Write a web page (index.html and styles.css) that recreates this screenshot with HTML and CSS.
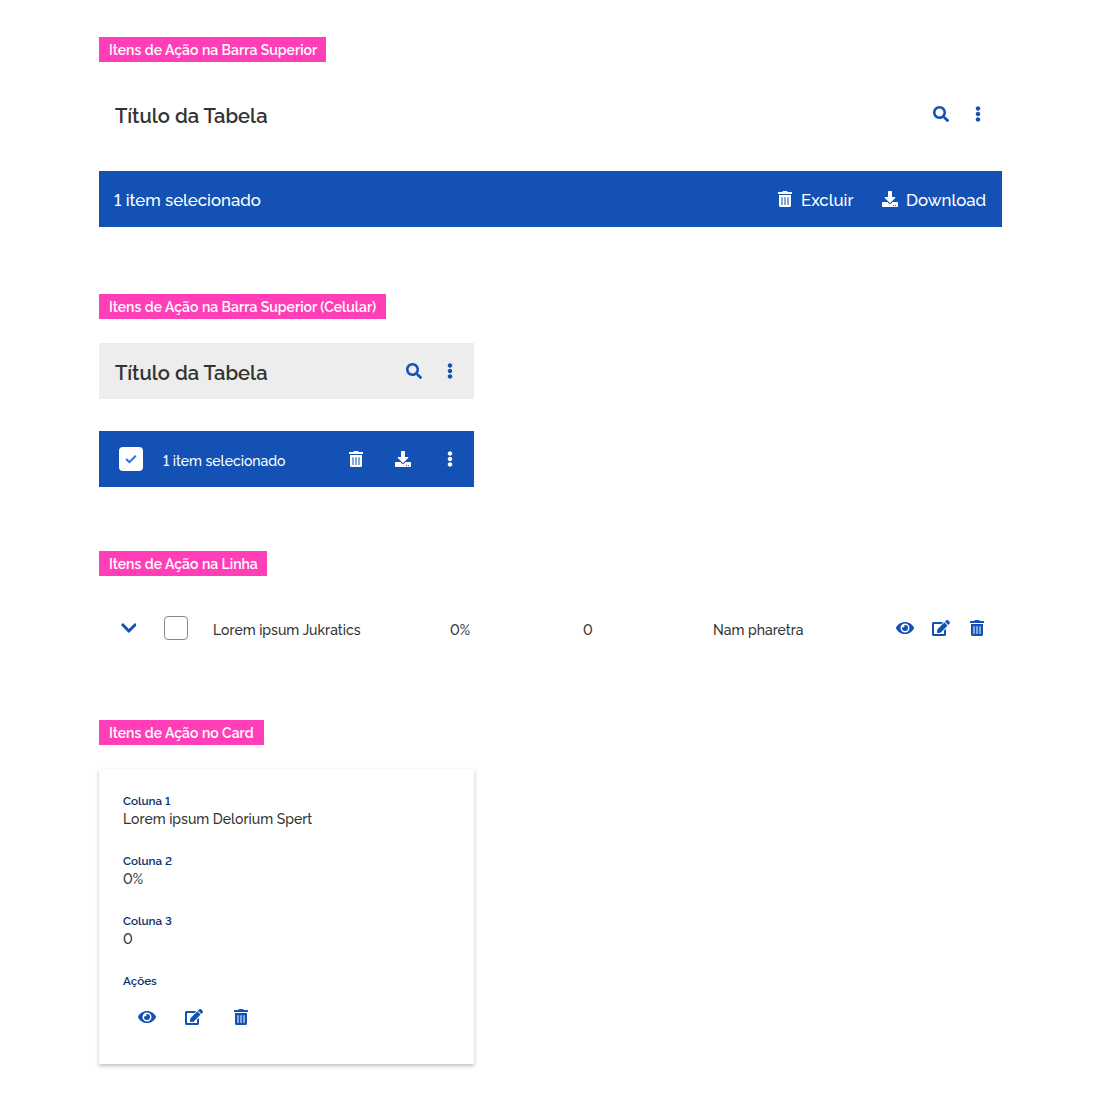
FILE: index.html
```
<!DOCTYPE html>
<html lang="pt-BR">
<head>
<meta charset="utf-8">
<title>Itens de Ação</title>
<link rel="stylesheet" href="styles.css">
</head>
<body>
<svg class="sprite" aria-hidden="true">
  <symbol id="search" viewBox="0 0 512 512"><path d="M505 442.7L405.3 343c-4.5-4.5-10.6-7-17-7H372c27.6-35.3 44-79.7 44-128C416 93.1 322.9 0 208 0S0 93.1 0 208s93.1 208 208 208c48.3 0 92.7-16.4 128-44v16.3c0 6.4 2.5 12.5 7 17l99.7 99.7c9.4 9.4 24.6 9.4 33.9 0l28.3-28.3c9.4-9.4 9.4-24.6.1-34zM208 336c-70.7 0-128-57.2-128-128 0-70.7 57.2-128 128-128 70.7 0 128 57.2 128 128 0 70.7-57.2 128-128 128z"/></symbol>
  <symbol id="dots" viewBox="0 0 192 512"><path d="M96 184c39.8 0 72 32.2 72 72s-32.2 72-72 72-72-32.2-72-72 32.2-72 72-72zM24 80c0 39.8 32.2 72 72 72s72-32.2 72-72S135.8 8 96 8 24 40.2 24 80zm0 352c0 39.8 32.2 72 72 72s72-32.2 72-72-32.2-72-72-72-72 32.2-72 72z"/></symbol>
  <symbol id="trash" viewBox="0 0 448 512"><path d="M32 464a48 48 0 0 0 48 48h288a48 48 0 0 0 48-48V128H32zm272-256a16 16 0 0 1 32 0v224a16 16 0 0 1-32 0zm-96 0a16 16 0 0 1 32 0v224a16 16 0 0 1-32 0zm-96 0a16 16 0 0 1 32 0v224a16 16 0 0 1-32 0zM432 32H312l-9.4-18.7A24 24 0 0 0 281.1 0H166.8a23.72 23.72 0 0 0-21.4 13.3L136 32H16A16 16 0 0 0 0 48v32a16 16 0 0 0 16 16h416a16 16 0 0 0 16-16V48a16 16 0 0 0-16-16z"/></symbol>
  <symbol id="download" viewBox="0 0 512 512"><path d="M216 0h80c13.3 0 24 10.7 24 24v168h87.7c17.8 0 26.7 21.5 14.1 34.1L269.7 378.3c-7.5 7.5-19.8 7.5-27.3 0L90.1 226.1c-12.6-12.6-3.7-34.1 14.1-34.1H192V24c0-13.3 10.7-24 24-24zm296 376v112c0 13.3-10.7 24-24 24H24c-13.3 0-24-10.7-24-24V376c0-13.3 10.7-24 24-24h146.7l49 49c20.1 20.1 52.5 20.1 72.6 0l49-49H488c13.3 0 24 10.7 24 24zm-124 88c0-11-9-20-20-20s-20 9-20 20 9 20 20 20 20-9 20-20zm64 0c0-11-9-20-20-20s-20 9-20 20 9 20 20 20 20-9 20-20z"/></symbol>
  <symbol id="edit" viewBox="0 0 576 512"><path d="M402.6 83.2l90.2 90.2c3.8 3.8 3.8 10 0 13.8L274.4 405.6l-92.8 10.3c-12.4 1.4-22.9-9.1-21.5-21.5l10.3-92.8L388.8 83.2c3.8-3.8 10-3.8 13.8 0zm162-22.9l-48.8-48.8c-15.2-15.2-39.9-15.2-55.2 0l-35.4 35.4c-3.8 3.8-3.8 10 0 13.8l90.2 90.2c3.8 3.8 10 3.8 13.8 0l35.4-35.4c15.2-15.3 15.2-40 0-55.2zM384 346.2V448H64V128h229.8c3.2 0 6.2-1.3 8.5-3.5l40-40c7.6-7.6 2.2-20.5-8.5-20.5H48C21.5 64 0 85.5 0 112v352c0 26.5 21.5 48 48 48h352c26.5 0 48-21.5 48-48V306.2c0-10.7-12.9-16-20.5-8.5l-40 40c-2.2 2.3-3.5 5.3-3.5 8.5z"/></symbol>
  <symbol id="eye" viewBox="0 0 576 512"><path d="M572.52 241.4C518.29 135.59 410.93 64 288 64S57.68 135.64 3.48 241.41a32.35 32.35 0 0 0 0 29.19C57.71 376.41 165.07 448 288 448s230.32-71.64 284.52-177.41a32.35 32.35 0 0 0 0-29.19zM288 400a144 144 0 1 1 144-144 143.93 143.93 0 0 1-144 144zm0-240a95.31 95.31 0 0 0-25.31 3.79 47.85 47.85 0 0 1-66.9 66.9A95.78 95.78 0 1 0 288 160z"/></symbol>
  <symbol id="chevron" viewBox="0 0 448 512"><path d="M207.029 381.476L12.686 187.132c-9.373-9.373-9.373-24.569 0-33.941l22.667-22.667c9.357-9.357 24.522-9.375 33.901-.04L224 284.505l154.745-154.021c9.379-9.335 24.544-9.317 33.901.04l22.667 22.667c9.373 9.373 9.373 24.569 0 33.941L240.971 381.476c-9.373 9.372-24.569 9.372-33.942 0z"/></symbol>
</svg>
<main class="page">
  <section class="group">
    <h2 class="tag">Itens de Ação na Barra Superior</h2>
    <div class="bar">
      <h3 class="title">Título da Tabela</h3>
      <div class="actions">
        <svg class="icon"><use href="#search"/></svg>
        <svg class="icon icon-dots"><use href="#dots"/></svg>
      </div>
    </div>
    <div class="bar bar-selected bar-wide">
      <span class="count">1 item selecionado</span>
      <div class="buttons">
        <span class="button"><svg class="icon icon-trash"><use href="#trash"/></svg><span class="button-text">Excluir</span></span>
        <span class="button"><svg class="icon"><use href="#download"/></svg><span class="button-text button-text-download">Download</span></span>
      </div>
    </div>
  </section>

  <section class="group group-mobile">
    <h2 class="tag tag-mobile">Itens de Ação na Barra Superior (Celular)</h2>
    <div class="bar bar-gray">
      <h3 class="title">Título da Tabela</h3>
      <div class="actions actions-mobile">
        <svg class="icon"><use href="#search"/></svg>
        <svg class="icon icon-dots"><use href="#dots"/></svg>
      </div>
    </div>
    <div class="bar bar-selected bar-compact">
      <span class="checkbox checkbox-on"><svg class="check" viewBox="0 0 12 10"><path d="M1.2 5 4.4 8.2 10.8 1.8"/></svg></span>
      <span class="count-small">1 item selecionado</span>
      <div class="tools">
        <svg class="icon icon-trash"><use href="#trash"/></svg>
        <svg class="icon"><use href="#download"/></svg>
        <svg class="icon icon-dots"><use href="#dots"/></svg>
      </div>
    </div>
  </section>

  <section class="group group-row">
    <h2 class="tag tag-row">Itens de Ação na Linha</h2>
    <div class="row">
      <svg class="icon icon-chevron"><use href="#chevron"/></svg>
      <span class="checkbox"></span>
      <span class="cell">Lorem ipsum Jukratics</span>
      <span class="cell">0%</span>
      <span class="cell">0</span>
      <span class="cell">Nam pharetra</span>
      <div class="row-actions">
        <svg class="icon icon-wide"><use href="#eye"/></svg>
        <svg class="icon icon-wide"><use href="#edit"/></svg>
        <svg class="icon icon-trash"><use href="#trash"/></svg>
      </div>
    </div>
  </section>

  <section class="group group-card">
    <h2 class="tag tag-card">Itens de Ação no Card</h2>
    <dl class="card">
      <div class="field"><dt>Coluna 1</dt><dd>Lorem ipsum Delorium Spert</dd></div>
      <div class="field"><dt>Coluna 2</dt><dd>0%</dd></div>
      <div class="field"><dt>Coluna 3</dt><dd>0</dd></div>
      <div class="field"><dt>Ações</dt>
        <dd class="card-actions">
          <svg class="icon icon-wide"><use href="#eye"/></svg>
          <svg class="icon icon-wide"><use href="#edit"/></svg>
          <svg class="icon icon-trash"><use href="#trash"/></svg>
        </dd>
      </div>
    </dl>
  </section>
</main>
</body>
</html>
```
FILE: styles.css
```
* { box-sizing: border-box; }
body {
  margin: 0;
  background: #fff;
  color: #333;
  font-family: Raleway, Lato, sans-serif;
  font-size: 14px;
  font-weight: 500;
  font-variant-numeric: lining-nums;
}
h2, h3, dl, dd { margin: 0; }
.sprite { display: none; }
.page { padding: 37px 98px 36px 99px; }
.group { display: flex; flex-direction: column; align-items: flex-start; }
.group-mobile { margin-top: 67px; }
.group-row { margin-top: 64px; }
.group-card { margin-top: 64px; }

.tag {
  height: 25px;
  padding: 1px 0 0 10px;
  background: #ff3eb8;
  color: #fff;
  font-size: 14px;
  font-weight: 600;
  line-height: 25px;
  white-space: nowrap;
  width: 227px;
}
.tag-mobile { width: 287px; }
.tag-row { width: 168px; }
.tag-card { width: 165px; }

.icon { display: block; flex: none; width: 16px; height: 16px; fill: currentColor; }
.icon-dots { width: 6px; }
.icon-trash { width: 14px; }
.icon-wide { width: 18px; }
.icon-chevron { width: 15.75px; height: 18px; color: #1351b4; }

.bar {
  display: flex;
  align-items: center;
  justify-content: space-between;
  width: 903px;
  height: 56px;
  margin-top: 24px;
  padding: 0 21px 0 16px;
}
.bar-wide { margin-top: 29px; padding: 0 16px 0 15px; }
.bar-selected { background: #1351b4; color: #fff; }
.bar-gray { width: 375px; background: #ededed; }
.bar-compact { width: 375px; margin-top: 32px; padding: 0 21px 0 20px; }

.title { padding-top: 3px; font-size: 20.16px; font-weight: 600; line-height: 24px; white-space: nowrap; }
.actions { display: flex; gap: 26px; color: #1351b4; }
.actions-mobile { gap: 25px; }
.count { padding-top: 2px; font-size: 16.8px; line-height: 24px; }
.buttons { display: flex; gap: 28px; }
.button { display: flex; align-items: center; gap: 9px; }
.button:last-child { gap: 8px; }
.button-text { width: 53px; padding-top: 2px; font-size: 16.8px; line-height: 24px; white-space: nowrap; }
.button-text-download { width: 80px; }

.checkbox { flex: none; width: 24px; height: 24px; border: 1px solid #888; border-radius: 4px; background: #fff; }
.checkbox-on { display: flex; align-items: center; justify-content: center; border: 0; }
.check { width: 12px; height: 10px; fill: none; stroke: #2670e8; stroke-width: 2; }
.count-small { flex: 1; padding: 4px 0 0 20px; font-size: 14px; }
.tools { display: flex; }
.tools .icon + .icon { margin-left: 32px; }
.tools .icon + .icon-dots { margin-left: 36px; }

.row {
  display: grid;
  grid-template-columns: 43.5px 49px 237px 133px 130px 183px auto;
  align-items: center;
  height: 56px;
  width: 903px;
  margin-top: 24px;
  padding-left: 21.5px;
}
.cell { padding-top: 4px; white-space: nowrap; }
.row-actions { display: flex; gap: 18px; color: #1351b4; }
.row-actions .icon-trash { margin-left: 2px; }

.card {
  width: 375px;
  height: 295px;
  margin-top: 24px;
  padding: 23px 24px 0;
  background: #fff;
  box-shadow: 0 2px 4px rgba(0, 0, 0, .25);
}
.field { height: 60px; }
.field dt { color: #0c326f; font-size: 11.67px; font-weight: 600; line-height: 18px; }
.field dd { line-height: 18px; }
.card-actions { display: flex; align-items: center; padding: 19px 0 0 15px; color: #1351b4; }
.card-actions .icon + .icon { margin-left: 29px; }
.card-actions .icon + .icon-trash { margin-left: 31px; }
```
